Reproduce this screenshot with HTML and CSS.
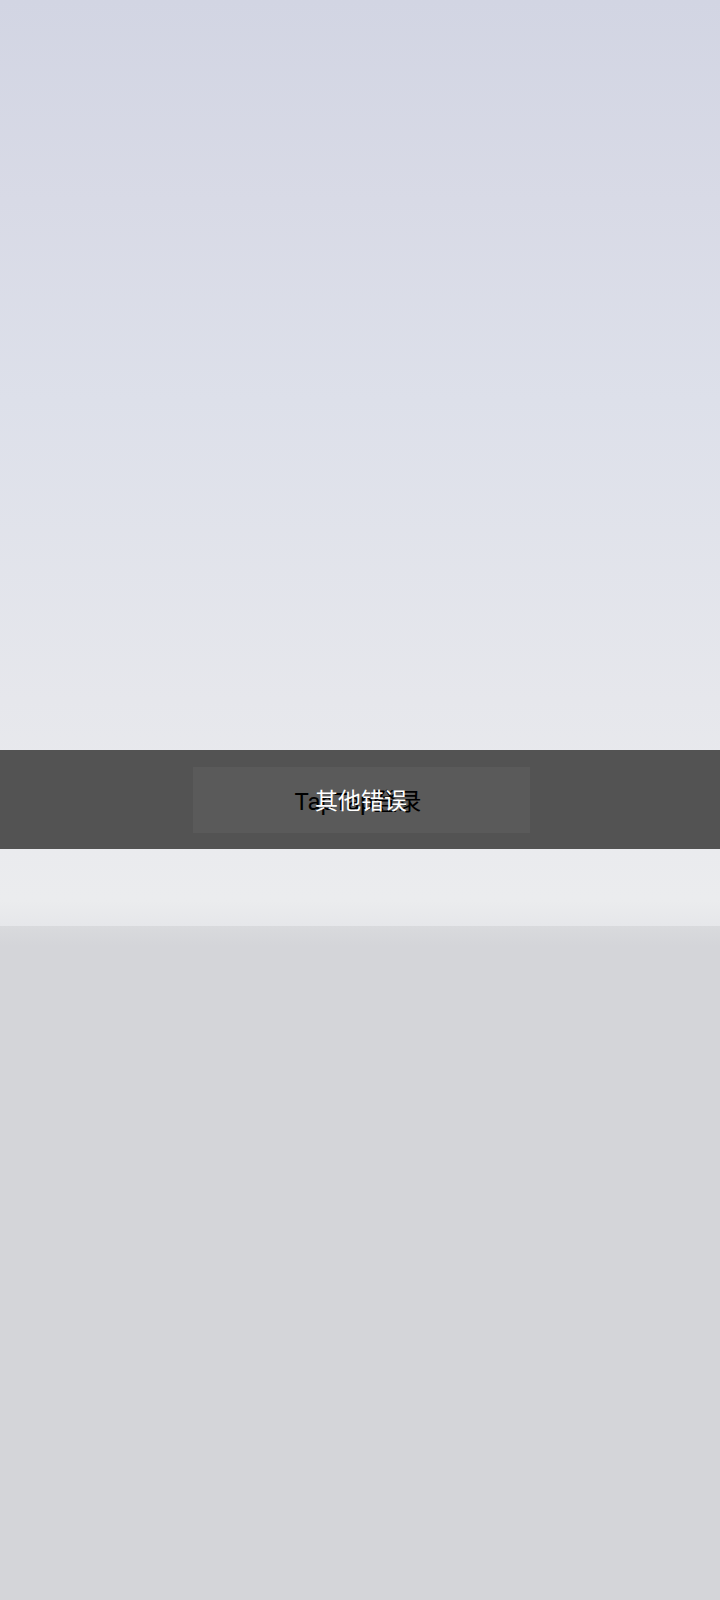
FILE: index.html
```html
<!DOCTYPE html>
<html lang="zh-CN">
<head>
<meta charset="utf-8">
<title>其他错误</title>
<link rel="stylesheet" href="styles.css">
</head>
<body>
<div class="page">
  <div class="top">
    <div class="spacer-a"></div>
    <div class="toast-band">
      <div class="toast-box">
        <span class="label-under">TapTap登录</span>
        <span class="label-over">其他错误</span>
      </div>
    </div>
    <div class="spacer-b"></div>
  </div>
  <div class="bottom"></div>
</div>
</body>
</html>
```
FILE: styles.css
```css
html, body {
  margin: 0;
  padding: 0;
}
body {
  width: 720px;
  height: 1600px;
  overflow: hidden;
  font-family: Roboto, "Noto Sans CJK SC", sans-serif;
  background: #d4d5d9;
}
.page {
  display: flex;
  flex-direction: column;
  height: 1600px;
}
.top {
  height: 926px;
  display: flex;
  flex-direction: column;
  background: linear-gradient(180deg, #d2d5e3 0px, #d8dae6 200px, #dde0ea 400px, #e6e7ec 700px, #eaebee 850px, #ebecee 900px, #e6e7ea 926px);
}
.spacer-a {
  height: 750px;
}
.toast-band {
  height: 99px;
  background: #535353;
  display: flex;
  justify-content: center;
  align-items: center;
}
.toast-box {
  width: 337px;
  height: 66px;
  margin-left: 2px;
  background: #5a5a5a;
  display: grid;
  place-items: center;
  padding-top: 4px;
  box-sizing: border-box;
}
.label-under,
.label-over {
  grid-area: 1 / 1;
  line-height: 1;
  white-space: nowrap;
  font-weight: 400;
}
.label-under {
  color: #000;
  font-size: 24px;
  margin-right: 6px;
}
.label-over {
  color: #fff;
  font-size: 23px;
}
.spacer-b {
  flex: 1;
}
.bottom {
  flex: 1;
  background: linear-gradient(180deg, #d9dadd 0px, #d4d5d9 20px, #d4d5d9 100%);
}
```
